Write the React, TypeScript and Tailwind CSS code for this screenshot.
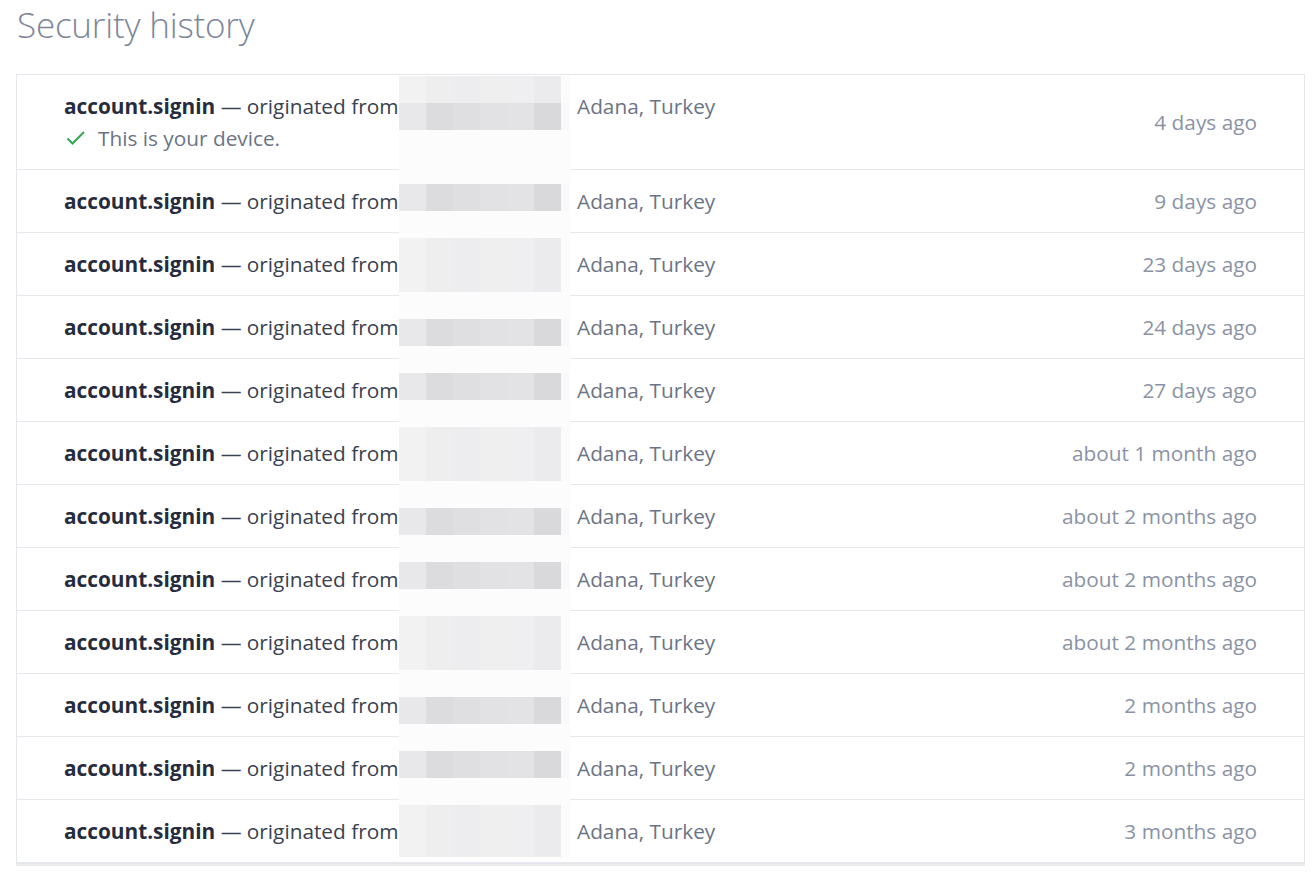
import React from "react";

const ROWS = [
  { time: "4 days ago", mine: true },
  { time: "9 days ago" },
  { time: "23 days ago" },
  { time: "24 days ago" },
  { time: "27 days ago" },
  { time: "about 1 month ago" },
  { time: "about 2 months ago" },
  { time: "about 2 months ago" },
  { time: "about 2 months ago" },
  { time: "2 months ago" },
  { time: "2 months ago" },
  { time: "3 months ago" },
];

// mosaic hiding the IP addresses: 29 bands of 27px. d = dark band, l = light band, w = blank
const BAND_MAP = ["l", "d", "w", "w", "d", "w", "l", "l", "w", "d", "w", "d", "w", "l", "l", "w", "d", "w", "d", "w", "l", "l", "w", "d", "w", "d", "w", "l", "l"];

const DARK = ["#e8e8ea", "#dcdcde", "#dfdfe2", "#e2e2e4", "#e3e3e5", "#d9d9db", "#f9f9fb"];
const LIGHT = ["#f2f2f3", "#eeeeef", "#ededef", "#efeff0", "#efeff1", "#ebebed", "#fbfbfc"];

function Mosaic() {
  return (
    <div className="absolute left-[382px] top-[1px] w-[171px] h-[781px] overflow-hidden flex flex-col pointer-events-none">
      {BAND_MAP.map((b, i) => (
        <div key={i} className="flex h-[27px] shrink-0">
          {DARK.map((d, j) => {
            const w = j === 6 ? "w-[9px]" : "w-[27px]";
            const bg = b === "d" ? d : b === "l" ? LIGHT[j] : "#fcfcfc";
            return <div key={j} className={`${w} h-full`} style={{ background: bg }} />;
          })}
        </div>
      ))}
    </div>
  );
}

export default function App() {
  return (
    <div className="min-h-screen bg-white font-['Segoe_UI','Open_Sans',sans-serif]">
      <div className="pl-[16px] pr-[11px] pt-[2px]">
        <h1 className="text-[35px] font-light text-[#7d8699] leading-[46px] pl-[1px] tracking-[-0.2px]">Security history</h1>

        <div className="relative mt-[26px] border border-[#e3e6ea] bg-white shadow-[0_2px_0_#ececef]">
          {ROWS.map((r, i) => (
            <div key={i} className="flex items-center px-[47px] py-[15px] border-b border-[#e6e8ec] last:border-b-0 leading-[32px] text-[20.8px]">
              <div className="w-[513px] shrink-0">
                <div className="whitespace-nowrap text-[#3a4150]">
                  <span className="font-bold text-[#262c3d]">account.signin</span> — originated from
                </div>
                {r.mine && (
                  <div className="flex items-center text-[#6b7486]">
                    <svg width="20" height="16" viewBox="0 0 20 16" className="ml-[2px] mr-[12px]">
                      <path d="M1.5 8.5 L6.5 13.5 L18 2" fill="none" stroke="#2fa84f" strokeWidth="2" />
                    </svg>
                    This is your device.
                  </div>
                )}
              </div>
              <div className="text-[#6b7486] whitespace-nowrap self-start">Adana, Turkey</div>
              <div className="flex-1 text-right text-[#8a93a5] whitespace-nowrap">{r.time}</div>
            </div>
          ))}
          <Mosaic />
        </div>
      </div>
    </div>
  );
}
